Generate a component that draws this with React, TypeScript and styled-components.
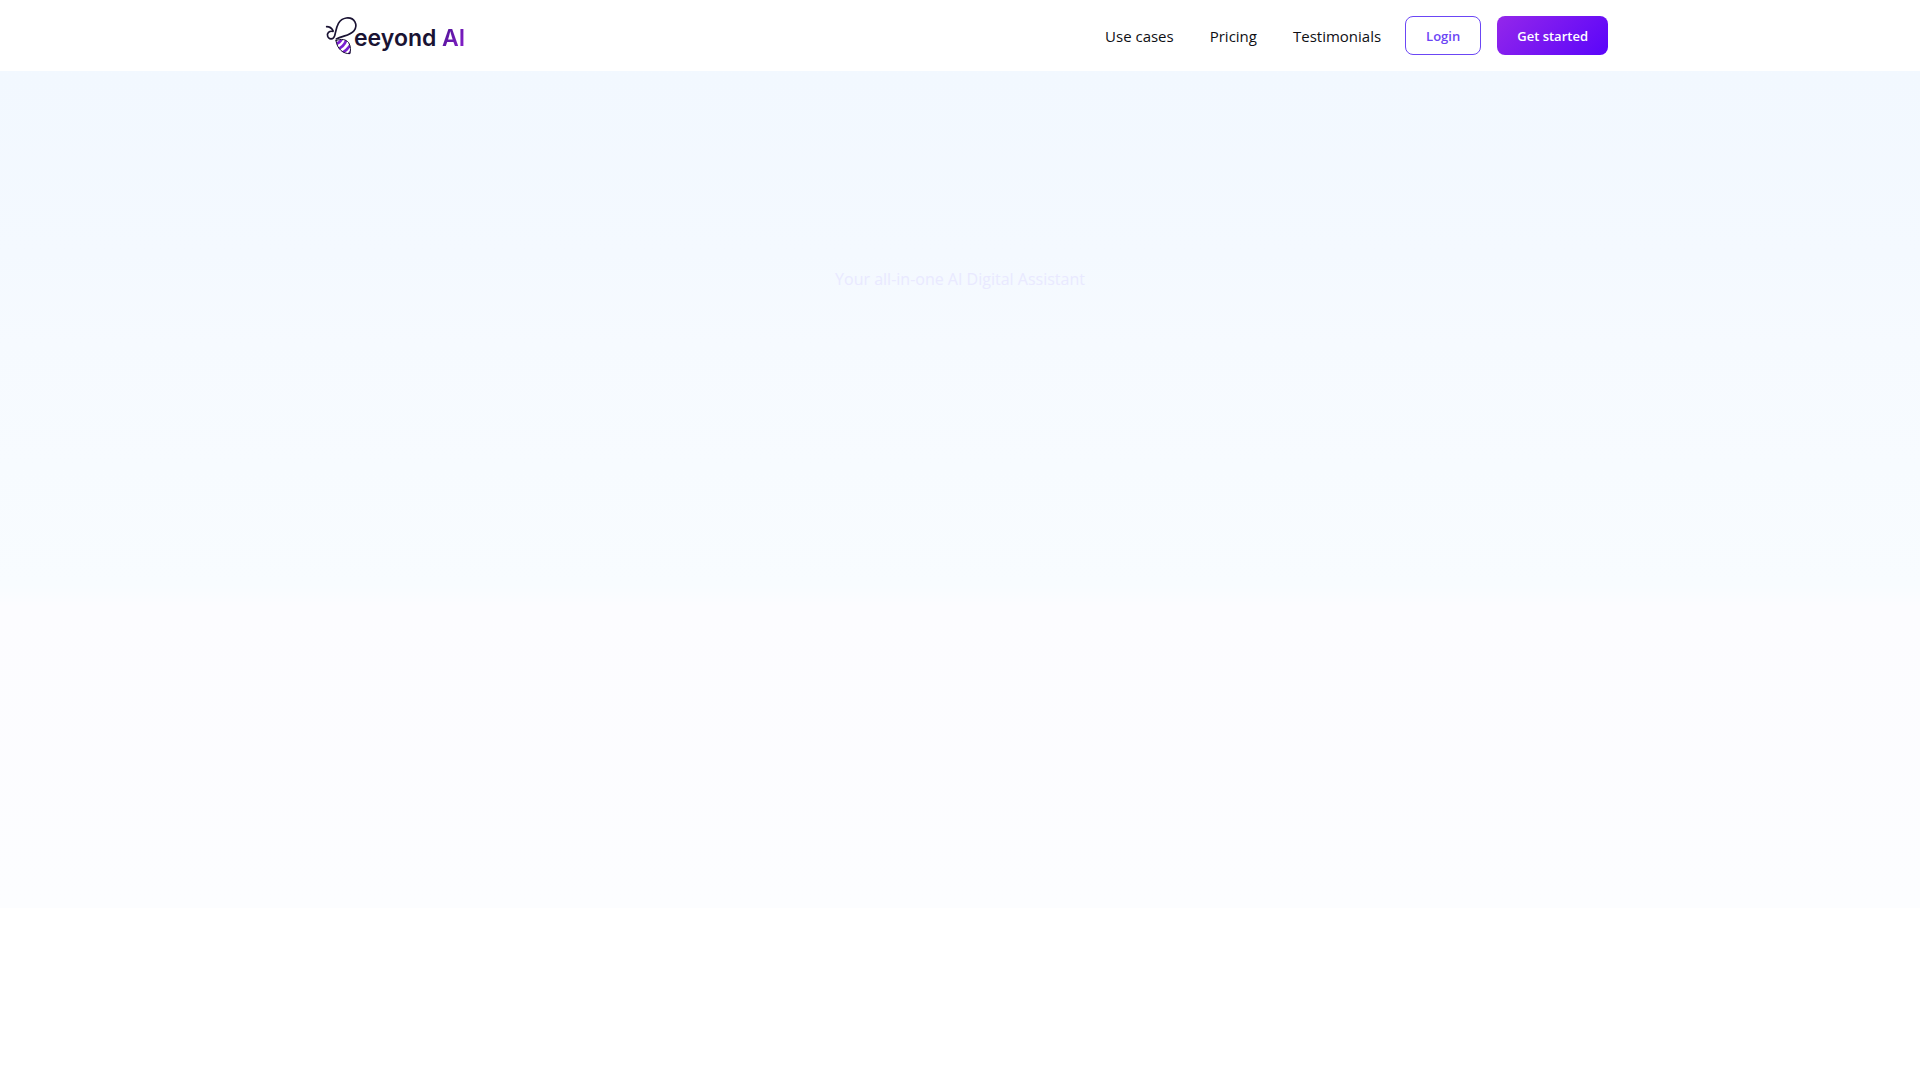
import React from "react";
import styled, { createGlobalStyle } from "styled-components";

const GlobalStyle = createGlobalStyle`
  * { box-sizing: border-box; }
  body {
    margin: 0;
    background: #ffffff;
    color: #0f0f14;
    font-family: "Open Sans", "Noto Sans", sans-serif;
    font-size: 15px;
    line-height: 24px;
  }
`;

const Page = styled.div`
  display: flex;
  flex-direction: column;
  min-height: 100vh;
`;

const Header = styled.header`
  padding: 16px 24px;
  background: #ffffff;
`;

const HeaderInner = styled.div`
  display: flex;
  align-items: center;
  justify-content: space-between;
  max-width: 1296px;
  margin: 0 auto;
`;

const Brand = styled.a`
  display: flex;
  align-items: center;
  margin-left: 12px;
  color: #1a1333;
  text-decoration: none;
  font-family: Inter, sans-serif;
  font-size: 23px;
  font-weight: 600;
`;

const BeeMark = styled.svg`
  width: 30px;
  height: 39px;
  overflow: visible;
`;

const BrandName = styled.span`
  padding-top: 4px;
`;

const BrandAccent = styled.span`
  background: linear-gradient(120deg, #4a1390, #8b1fd0);
  background-clip: text;
  color: transparent;
`;

const Actions = styled.div`
  display: flex;
  align-items: center;
  gap: 16px;
`;

const Nav = styled.nav`
  display: flex;
  gap: 36px;
  margin-right: 8px;
`;

const NavLink = styled.a`
  color: inherit;
  text-decoration: none;
`;

const Button = styled.button<{ $primary?: boolean }>`
  height: 39px;
  padding: 0 20px;
  border: ${(p) => (p.$primary ? "none" : "1px solid #6b46f5")};
  border-radius: 8px;
  background: ${(p) => (p.$primary ? "linear-gradient(135deg, #9427ea, #5a05fa)" : "#ffffff")};
  color: ${(p) => (p.$primary ? "#ffffff" : "#6b46f5")};
  font-family: inherit;
  font-size: 13px;
  font-weight: 600;
  cursor: pointer;
`;

const Hero = styled.main`
  flex: 1;
  padding: 196px 24px;
  text-align: center;
  background: linear-gradient(#f2f8ff, #f4f9ff 18%, #f6faff 27%, #f8fcff 51%, #fcfcff 53%, #fcfdff 83%, #ffffff 83%);
`;

const Tagline = styled.p`
  margin: 0;
  color: #e9e9ff;
  font-size: 16px;
`;

function Bee() {
  return (
    <BeeMark viewBox="27 18 90 117" aria-hidden="true">
      <defs>
        <clipPath id="bee-body">
          <path d="M63 92C79 85 93 88 101 98C108 109 107 122 105 132C85 133 66 117 63 92Z" />
        </clipPath>
      </defs>
      <g clipPath="url(#bee-body)" stroke="#7a1fd0" strokeWidth="8" fill="none">
        <path d="M57 103Q75 102 83 82M64 118Q85 115 96 86M73 132Q96 125 110 98M88 143Q103 134 114 116" />
      </g>
      <g fill="none" stroke="#1a1333" strokeWidth="5" strokeLinecap="round" strokeLinejoin="round">
        <path d="M35 50Q48 50 54 62" />
        <path d="M54 64C42 62 35 70 38 79C42 90 55 89 59 77C64 61 65 28 94 24C119 21 130 45 117 62C107 76 83 77 64 87" />
        <path d="M63 92C79 85 93 88 101 98C108 109 107 122 105 131C85 132 66 117 63 92Z" strokeWidth="3" />
      </g>
    </BeeMark>
  );
}

export default function App() {
  return (
    <Page>
      <GlobalStyle />
      <Header>
        <HeaderInner>
          <Brand href="#">
            <Bee />
            <BrandName>eeyond <BrandAccent>AI</BrandAccent></BrandName>
          </Brand>
          <Actions>
            <Nav>
              <NavLink href="#use-cases">Use cases</NavLink>
              <NavLink href="#pricing">Pricing</NavLink>
              <NavLink href="#testimonials">Testimonials</NavLink>
            </Nav>
            <Button type="button">Login</Button>
            <Button type="button" $primary>Get started</Button>
          </Actions>
        </HeaderInner>
      </Header>
      <Hero>
        <Tagline>Your all-in-one AI Digital Assistant</Tagline>
      </Hero>
    </Page>
  );
}
